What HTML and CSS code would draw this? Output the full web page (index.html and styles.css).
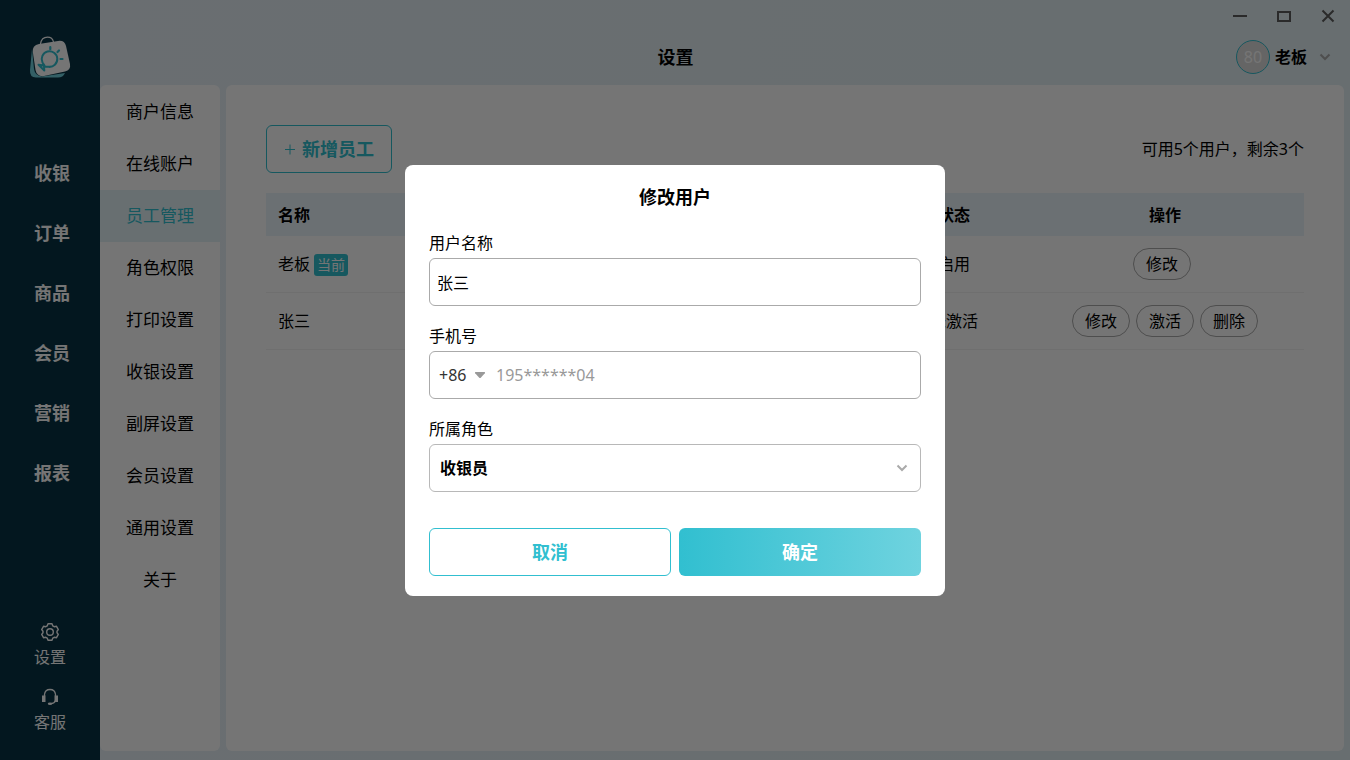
FILE: index.html
```html
<!DOCTYPE html>
<html lang="zh-CN">
<head>
<meta charset="utf-8">
<title>设置</title>
<link rel="stylesheet" href="styles.css">
</head>
<body>
<div class="app">
  <aside class="sidebar">
    <svg class="logo" viewBox="0 0 44 44" aria-hidden="true">
      <path d="M4 13 L2 34 Q1.500 41.500 8 41.500 L30 41.500 Q35 41.500 37 37 L14 40.500 Q7 40 6 33 Z" fill="#6fd0dc"/>
      <path d="M12.500 8 Q13.500 1.200 19.500 1.200 Q24.500 1.200 25.500 6" fill="none" stroke="#fff" stroke-width="1.200"/>
      <path d="M11 8 L30 5 Q36.500 4 38 10 L42 28 Q43 34 37 35.500 L16 40 Q9 41 7.500 34 L4.800 16 Q4 9.500 11 8 Z" fill="#fff"/>
      <path d="M14.500 26.500 A7.800 7.800 0 1 1 20.500 30.800 L16 30.500 L16.300 34.500 L10.500 28.700 L16.500 29.500 Z" fill="none" stroke="#31bfd0" stroke-width="2" stroke-linejoin="round"/>
      <path d="M22.300 11 v2.200 M29.500 16 l1.500 -1.500 M32.500 23 h2" stroke="#31bfd0" stroke-width="2.200" stroke-linecap="round"/>
    </svg>
    <nav class="main-nav">
      <a href="#">收银</a>
      <a href="#">订单</a>
      <a href="#">商品</a>
      <a href="#">会员</a>
      <a href="#">营销</a>
      <a href="#">报表</a>
    </nav>
    <nav class="foot-nav">
      <a href="#">
        <svg width="20" height="20" viewBox="0 0 20 20" fill="none" stroke="#fff" stroke-width="1.400" stroke-linejoin="round" aria-hidden="true"><path d="M8 1.700 H12 L12.800 3.900 L14.200 4.700 L16.500 4.300 L18.300 7.600 L17 9.300 V10.700 L18.300 12.400 L16.500 15.700 L14.200 15.300 L12.800 16.100 L12 18.300 H8 L7.200 16.100 L5.800 15.300 L3.500 15.700 L1.700 12.400 L3 10.700 V9.300 L1.700 7.600 L3.500 4.300 L5.800 4.700 L7.200 3.900 Z"/><circle cx="10" cy="10" r="3.300"/></svg>
        <span>设置</span>
      </a>
      <a href="#">
        <svg width="20" height="20" viewBox="0 0 20 20" fill="none" stroke="#fff" stroke-width="1.300" aria-hidden="true"><path d="M4.500 9 V7.500 Q5 2.500 10 2.500 Q15 2.500 15.500 7.500 V9 M15.500 13.500 Q14.500 16.500 11 16.700"/><path d="M2 8.500 h3.500 v6.500 h-3.500 z M14.500 8.500 h3.500 v6.500 h-3.500 z" fill="#fff" stroke="none"/><ellipse cx="10" cy="16.700" rx="2.200" ry="1.300" fill="#fff" stroke="none"/></svg>
        <span>客服</span>
      </a>
    </nav>
  </aside>

  <div class="content">
    <header class="topbar">
      <div class="window-controls">
        <button aria-label="最小化"><svg width="16" height="16" viewBox="0 0 16 16"><path d="M1 8 H15"/></svg></button>
        <button aria-label="最大化"><svg width="16" height="16" viewBox="0 0 16 16"><path d="M2 4 H14 V13 H2 Z"/></svg></button>
        <button aria-label="关闭"><svg width="16" height="16" viewBox="0 0 16 16"><path d="M2.500 2.500 L13.500 13.500 M13.500 2.500 L2.500 13.500"/></svg></button>
      </div>
      <div class="title-row">
        <h1>设置</h1>
        <button class="account">
          <span class="avatar">80</span>
          <span>老板</span>
          <svg class="chevron" width="12" height="12" viewBox="0 0 12 12"><path d="M1.500 3.500 L6 8 L10.500 3.500"/></svg>
        </button>
      </div>
    </header>
    <div class="panels">
      <nav class="submenu">
        <a href="#">商户信息</a>
        <a href="#">在线账户</a>
        <a href="#" class="active" aria-current="page">员工管理</a>
        <a href="#">角色权限</a>
        <a href="#">打印设置</a>
        <a href="#">收银设置</a>
        <a href="#">副屏设置</a>
        <a href="#">会员设置</a>
        <a href="#">通用设置</a>
        <a href="#">关于</a>
      </nav>
      <main class="staff">
        <div class="toolbar">
          <button class="add"><svg width="12" height="12" viewBox="0 0 12 12" aria-hidden="true"><path d="M1 6.500 H11 M6 1.500 V11.500"/></svg>新增员工</button>
          <p>可用5个用户，剩余3个</p>
        </div>
        <table class="staff-table">
          <colgroup><col><col class="col-state"><col class="col-actions"></colgroup>
          <thead>
            <tr><th class="name">名称</th><th>状态</th><th>操作</th></tr>
          </thead>
          <tbody>
            <tr>
              <td class="name">老板<span class="tag">当前</span></td>
              <td>启用</td>
              <td><div class="actions"><button class="edit">修改</button></div></td>
            </tr>
            <tr>
              <td class="name">张三</td>
              <td>未激活</td>
              <td><div class="actions"><button class="edit">修改</button><button class="edit">激活</button><button>删除</button></div></td>
            </tr>
          </tbody>
        </table>
      </main>
    </div>
  </div>
</div>

<div class="overlay">
  <form class="modal" role="dialog" aria-modal="true" aria-labelledby="modal-title">
    <h2 id="modal-title">修改用户</h2>
    <div class="field">
      <label for="user-name">用户名称</label>
      <input id="user-name" class="box" type="text" value="张三">
    </div>
    <div class="field">
      <label for="phone">手机号</label>
      <div class="box phone">
        <span class="code">
          <select aria-label="国家区号"><option>+86</option></select>
          <svg width="12" height="8" viewBox="0 0 12 8" aria-hidden="true"><path d="M1.500 1 H10.500 Q11.500 1 10.800 2.200 L7 6.500 Q6 7.500 5 6.500 L1.200 2.200 Q0.500 1 1.500 1 Z"/></svg>
        </span>
        <input id="phone" type="text" value="195******04">
      </div>
    </div>
    <div class="field">
      <label for="role">所属角色</label>
      <div class="box role">
        <select id="role"><option>收银员</option></select>
        <svg class="chevron" width="12" height="12" viewBox="0 0 12 12" aria-hidden="true"><path d="M1.500 3.500 L6 8 L10.500 3.500"/></svg>
      </div>
    </div>
    <div class="buttons">
      <button type="button" class="cancel">取消</button>
      <button type="button" class="confirm">确定</button>
    </div>
  </form>
</div>
</body>
</html>
```
FILE: styles.css
```css
* {
  box-sizing: border-box;
}

body {
  margin: 0;
  font: 16px/24px "Noto Sans", "Noto Sans CJK SC", sans-serif;
  color: #000;
}

button,
input,
select {
  margin: 0;
  padding: 0;
  border: 0;
  background: none;
  font: inherit;
  color: inherit;
}

select {
  appearance: none;
}

a {
  color: inherit;
  text-decoration: none;
}

h1,
h2,
p {
  margin: 0;
}

svg {
  display: block;
}

.app {
  display: flex;
  min-height: 100vh;
}

.sidebar {
  display: flex;
  flex-direction: column;
  flex: 0 0 100px;
  background: #083344;
  color: #fff;
}

.logo {
  width: 44px;
  height: 44px;
  margin: 36px 0 63px 28px;
}

.main-nav a {
  display: block;
  padding-left: 34px;
  font-size: 18px;
  font-weight: 700;
  line-height: 60px;
}

.foot-nav {
  display: flex;
  flex-direction: column;
  gap: 18px;
  margin-top: auto;
  padding-bottom: 26px;
}

.foot-nav a {
  display: flex;
  flex-direction: column;
  align-items: center;
  gap: 3px;
}

.content {
  display: flex;
  flex-direction: column;
  flex: 1;
  background: linear-gradient(90deg, #e6f0f7, #e2eff3);
}

.window-controls {
  display: flex;
  justify-content: flex-end;
  gap: 28px;
  height: 32px;
  padding-right: 14px;
}

.window-controls svg {
  fill: none;
  stroke: #5c5c5c;
  stroke-width: 2;
}

.title-row {
  display: grid;
  grid-template-columns: 1fr auto 1fr;
  align-items: center;
  height: 53px;
  padding: 0 19px 3px 0;
}

.title-row h1 {
  grid-column: 2;
  padding-right: 80px;
  font-size: 18px;
}

.account {
  display: flex;
  align-items: center;
  justify-self: end;
  font-weight: 700;
}

.avatar {
  width: 34px;
  height: 34px;
  margin-right: 5px;
  border: 1px solid #31bfd0;
  border-radius: 50%;
  background: #dcdcdc;
  color: #fff;
  font-weight: 400;
  line-height: 32px;
  text-align: center;
}

.chevron {
  fill: none;
  stroke: #aaa;
  stroke-width: 2;
}

.account .chevron {
  margin-left: 12px;
}

.panels {
  display: flex;
  flex: 1;
  gap: 6px;
  padding: 0 6px 9px 0;
}

.submenu {
  flex: 0 0 120px;
  padding-top: 1px;
  border-radius: 6px;
  background: #fff;
}

.submenu a {
  display: block;
  font-size: 17px;
  line-height: 52px;
  text-align: center;
}

.submenu .active {
  background: #e2f2f6;
  color: #31bfd0;
}

.staff {
  flex: 1;
  padding: 40px;
  border-radius: 6px;
  background: #fff;
}

.toolbar {
  display: flex;
  justify-content: space-between;
  align-items: center;
  margin-bottom: 20px;
}

.add {
  display: flex;
  align-items: center;
  gap: 6px;
  height: 48px;
  padding: 0 17px;
  border: 1px solid #31bfd0;
  border-radius: 6px;
  color: #31bfd0;
  font-size: 18px;
  font-weight: 700;
}

.add svg {
  fill: none;
  stroke: #31bfd0;
  stroke-width: 1;
}

.staff-table {
  width: 100%;
  border-spacing: 0;
  table-layout: fixed;
}

.col-state {
  width: 144px;
}

.col-actions {
  width: 278px;
}

.staff-table th {
  height: 43px;
  padding: 0;
  background: #eaf4fb;
}

.staff-table td {
  height: 57px;
  padding: 0;
  border-bottom: 1px solid #f2f2f2;
  text-align: center;
}

.staff-table .name {
  padding-left: 12px;
  text-align: left;
}

.tag {
  display: inline-block;
  margin-left: 4px;
  padding: 0 3px;
  border-radius: 3px;
  background: #31bfd0;
  color: #fff;
  font-size: 14px;
  line-height: 22px;
}

.actions {
  display: flex;
  justify-content: center;
}

.actions button {
  height: 32px;
  padding: 0 12px;
  border: 1px solid #aaa;
  border-radius: 16px;
}

.actions .edit {
  margin-right: 6px;
}

.overlay {
  position: fixed;
  inset: 0;
  display: flex;
  align-items: center;
  justify-content: center;
  background: rgba(0, 0, 0, 0.54);
}

.modal {
  width: 540px;
  padding: 16px 24px 20px;
  border-radius: 8px;
  background: #fff;
}

.modal h2 {
  font-size: 18px;
  line-height: 32px;
  text-align: center;
}

.field {
  margin-top: 15px;
}

.field label {
  display: block;
  line-height: 30px;
}

.box {
  display: flex;
  align-items: center;
  width: 100%;
  height: 48px;
  padding: 0 7px;
  border: 1px solid #aaa;
  border-radius: 6px;
}

.phone {
  gap: 10px;
  padding: 0 9px;
  color: #999;
}

.phone input {
  flex: 1;
}

.code {
  display: flex;
  align-items: center;
  gap: 7px;
  color: #333;
}

.code svg {
  fill: #999;
}

.role {
  padding: 0 12px 0 10px;
  border-color: #b8b8b8;
}

.role select {
  flex: 1;
  font-weight: 700;
}

.buttons {
  display: grid;
  grid-template-columns: 1fr 1fr;
  gap: 8px;
  margin-top: 36px;
}

.buttons button {
  height: 48px;
  border-radius: 6px;
  font-size: 18px;
  font-weight: 700;
}

.cancel {
  border: 1px solid #31bfd0;
  color: #31bfd0;
}

.confirm {
  background: linear-gradient(90deg, #31bfd0, #6fd3df);
  color: #fff;
}
```
